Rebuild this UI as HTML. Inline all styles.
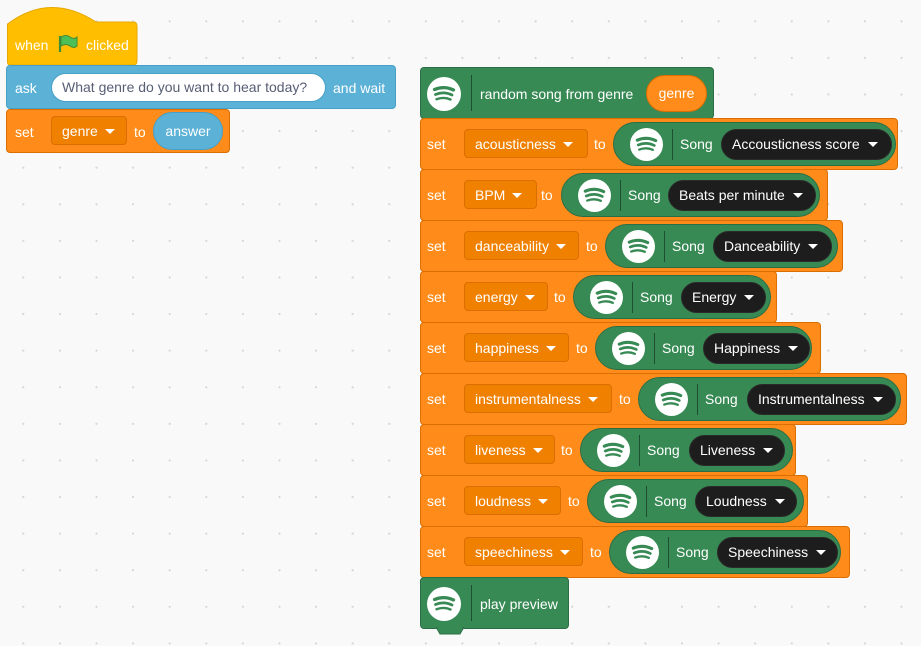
<!DOCTYPE html>
<html><head><meta charset="utf-8"><style>
*{box-sizing:border-box;margin:0;padding:0}
body{width:921px;height:646px;overflow:hidden;background-color:#f9f9f9;
background-image:radial-gradient(circle,#d6d6d6 0.9px,transparent 1.3px);
background-size:36.6px 36.6px;background-position:5px 3px;
font-family:"Liberation Sans",Arial,sans-serif;font-size:14px;color:#fff;position:relative}
.a{position:absolute;white-space:nowrap}
.blk{position:absolute;border:1px solid #db6e00;background:#ff8c1a;border-radius:4px}
.t{position:absolute;line-height:16px}
.fld{position:absolute;height:29px;background:#f08000;border:1px solid #db6e00;border-radius:4px;padding-left:10px;line-height:28px}
.fld:after{content:"";display:inline-block;margin-left:7px;border-left:5px solid transparent;border-right:5px solid transparent;border-top:5px solid #fff;vertical-align:2px}
.rep{position:absolute;height:44px;background:#388a55;border:1px solid #2b6e45;border-radius:22px}
.ic{position:absolute;top:5px;width:33px;height:33px}
.dv{position:absolute;top:6px;width:1px;height:31px;background:#1f4d31}
.dk{position:absolute;top:6px;height:31px;background:#1d1d1d;border-radius:16px;padding-left:10px;line-height:28px;border:1px solid #2a2a2a}
.dk:after{content:"";display:inline-block;margin-left:8px;border-left:5px solid transparent;border-right:5px solid transparent;border-top:5px solid #fff;vertical-align:2px}
</style></head><body>
<svg width="0" height="0" style="position:absolute"><defs>
<symbol id="sp" viewBox="0 0 34 34"><circle cx="17" cy="17" r="17" fill="#fff"/>
<path d="M7.5 12.5 Q17 8.5 26.5 13" stroke="#388a55" stroke-width="3.2" fill="none" stroke-linecap="round"/>
<path d="M8.5 17.5 Q17 14 25 18" stroke="#388a55" stroke-width="2.8" fill="none" stroke-linecap="round"/>
<path d="M9.5 22.2 Q17 19.5 23.5 22.5" stroke="#388a55" stroke-width="2.4" fill="none" stroke-linecap="round"/></symbol>
</defs></svg>

<!-- left stack -->
<svg class="a" style="left:0;top:0" width="140" height="68"><path d="M7.5 24 Q50 -8 96 22 L133 22 Q137 22 137 26 L137 61 Q137 65 133 65 L10 65 Q7.5 65 7.5 62 Z" fill="#ffbf00" stroke="#e6a800"/></svg>
<div class="t" style="left:15px;top:37px">when</div>
<svg class="a" style="left:57px;top:34px" width="22" height="20"><path d="M3 2 L3 18" stroke="#3f8d36" stroke-width="2.2"/><path d="M4 3 Q9 0 13 3 Q17 6 20 3 L20 12 Q17 15 13 12 Q9 9 4 12Z" fill="#4cbf56" stroke="#3f8d36"/></svg>
<div class="t" style="left:86px;top:37px">clicked</div>

<div class="blk" style="left:6px;top:65px;width:390px;height:44px;background:#5cb1d6;border-color:#47a0c6"></div>
<div class="t" style="left:15px;top:80px">ask</div>
<div class="a" style="left:51px;top:73px;width:275px;height:29px;background:#fff;border:1px solid #47a0c6;border-radius:15px;color:#575e75;line-height:27px;padding-left:10px">What genre do you want to hear today?</div>
<div class="t" style="left:333px;top:80px">and wait</div>

<div class="blk" style="left:6px;top:109px;width:224px;height:44px"></div>
<div class="t" style="left:15px;top:124px">set</div>
<div class="fld" style="left:51px;top:116px;width:76px">genre</div>
<div class="t" style="left:134px;top:124px">to</div>
<div class="a" style="left:153px;top:112px;width:70px;height:38px;background:#5cb1d6;border:1px solid #47a0c6;border-radius:19px;line-height:36px;text-align:center">answer</div>

<!-- right stack -->
<div class="blk" style="left:420px;top:67px;width:294px;height:52px;background:#388a55;border-color:#2b6e45"></div>
<svg class="a" style="left:427px;top:77px" width="34" height="34"><use href="#sp"/></svg>
<div class="a" style="left:471px;top:75px;width:1px;height:36px;background:#1f4d31"></div>
<div class="t" style="left:480px;top:86px">random song from genre</div>
<div class="a" style="left:646px;top:75px;width:61px;height:37px;background:#ff8c1a;border:1px solid #db6e00;border-radius:19px;line-height:35px;text-align:center">genre</div>

<div id="rows"></div>

<div class="blk" style="left:420px;top:577px;width:149px;height:52px;background:#388a55;border-color:#2b6e45"></div>
<svg class="a" style="left:427px;top:587px" width="34" height="34"><use href="#sp"/></svg>
<div class="a" style="left:471px;top:585px;width:1px;height:36px;background:#1f4d31"></div>
<div class="t" style="left:480px;top:596px">play preview</div>
<svg class="a" style="left:436px;top:627px" width="30" height="9"><path d="M0 0 L4 7 L24 7 L28 0Z" fill="#388a55"/><path d="M0 0 L4 7 L24 7 L28 0" fill="none" stroke="#2b6e45"/></svg>

<script>
var R=[["acousticness",588,594,613,896,"Accousticness score",721,892,898],
["BPM",537,541,561,820,"Beats per minute",668,816,828],
["danceability",579,586,605,838,"Danceability",713,832,843],
["energy",548,554,573,771,"Energy",681,766,777],
["happiness",569,576,595,812,"Happiness",703,810,821],
["instrumentalness",612,619,638,901,"Instrumentalness",747,896,907],
["liveness",555,561,580,793,"Liveness",689,785,796],
["loudness",561,568,587,804,"Loudness",695,797,808],
["speechiness",583,590,609,841,"Speechiness",717,838,850]];
var h="";
R.forEach(function(r,i){var y=118+i*51;
h+='<div class="blk" style="left:420px;top:'+y+'px;width:'+(r[8]-420)+'px;height:52px"></div>';
h+='<div class="t" style="left:427px;top:'+(y+18)+'px">set</div>';
h+='<div class="fld" style="left:464px;top:'+(y+11)+'px;width:'+(r[1]-464)+'px">'+r[0]+'</div>';
h+='<div class="t" style="left:'+r[2]+'px;top:'+(y+18)+'px">to</div>';
var L=r[3];
h+='<div class="rep" style="left:'+L+'px;top:'+(y+4)+'px;width:'+(r[4]-L)+'px">'+
'<svg class="ic" style="left:16px" width="33" height="33"><use href="#sp"/></svg>'+
'<div class="dv" style="left:58px"></div>'+
'<div class="t" style="left:66px;top:13px">Song</div>'+
'<div class="dk" style="left:'+(r[6]-L-1)+'px;width:'+(r[7]-r[6])+'px">'+r[5]+'</div></div>';
});
document.getElementById("rows").outerHTML=h;
</script>
</body></html>
